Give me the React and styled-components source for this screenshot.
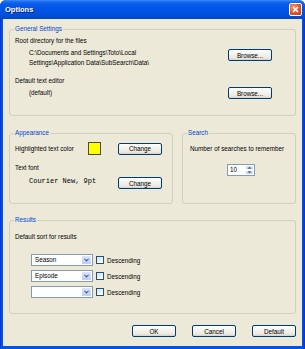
import React from "react";
import styled, { createGlobalStyle } from "styled-components";

const Global = createGlobalStyle`
  html, body { margin: 0; padding: 0; background: #ffffff; }
  * { box-sizing: border-box; }
  body { font-family: "Liberation Sans", Arial, sans-serif; }
`;

const Window = styled.div`
  width: 305px;
  height: 349px;
  display: flex;
  flex-direction: column;
  background: linear-gradient(90deg, #0831d9 0px, #0055e5 2px, #0055e5 302px, #0831d9 305px);
  border-radius: 6px 6px 0 0;
  overflow: hidden;
`;

const TitleBar = styled.div`
  height: 19px;
  flex: none;
  display: flex;
  align-items: center;
  justify-content: space-between;
  padding: 0 3px 0 5px;
  background: linear-gradient(
    180deg,
    #3d8cf7 0px,
    #1668ee 2px,
    #0558e8 5px,
    #0155e6 10px,
    #0150d9 15px,
    #0248c8 19px
  );
`;

const Title = styled.span`
  color: #ffffff;
  font-family: "Liberation Sans", Arial, sans-serif;
  font-weight: bold;
  font-size: 7.5px;
  line-height: 19px;
  text-shadow: 1px 1px 0 #0a1e80;
`;

const CloseButton = styled.div`
  width: 13px;
  height: 13px;
  border: 1px solid #ffffff;
  border-radius: 2px;
  background: radial-gradient(circle at 35% 30%, #f09a7c 0%, #e2582e 50%, #c13b12 100%);
  display: flex;
  align-items: center;
  justify-content: center;
`;

const Body = styled.div`
  flex: 1;
  margin: 0 3px 3px 3px;
  background: #ece9d8;
  padding: 10px 6px 9px 6px;
  display: flex;
  flex-direction: column;
  font-size: 6.3px;
  color: #000000;
`;

const Group = styled.div`
  position: relative;
  border: 1px solid #d0d0bf;
  border-radius: 3px;
  padding: ${(p) => p.$pad};
  width: ${(p) => p.$width || "auto"};
  flex: ${(p) => (p.$grow ? 1 : "none")};
  margin-top: ${(p) => p.$mt || 0}px;
`;

const Legend = styled.span`
  position: absolute;
  top: -5px;
  left: 4px;
  padding: 0 1px;
  background: #ece9d8;
  color: #0046d5;
  font-size: 6.3px;
  line-height: 8px;
`;

const Label = styled.div`
  line-height: 8px;
  margin-top: ${(p) => p.$mt || 0}px;
  white-space: nowrap;
`;

const PathRow = styled.div`
  display: flex;
  align-items: ${(p) => p.$align || "flex-start"};
  margin-top: ${(p) => p.$mt || 0}px;
  padding-left: 14px;
  padding-right: 23px;
`;

const PathText = styled.div`
  flex: 1;
  line-height: ${(p) => p.$lh}px;
  white-space: nowrap;
`;

const Button = styled.div`
  width: 44px;
  height: 12px;
  flex: none;
  border: 1px solid #003c74;
  border-radius: 2px;
  background: linear-gradient(180deg, #ffffff 0%, #f4f3ee 40%, #ebe9e0 80%, #d6d0c5 100%);
  display: flex;
  align-items: center;
  justify-content: center;
  font-size: 6.3px;
  color: #000000;
  margin-top: ${(p) => p.$mt || 0}px;
`;

const Columns = styled.div`
  display: flex;
  gap: 9px;
  margin-top: 17px;
`;

const ColorRow = styled.div`
  display: flex;
  align-items: center;
  height: 13px;
`;

const ColorLabel = styled.span`
  width: 73px;
  white-space: nowrap;
`;

const Swatch = styled.div`
  width: 13px;
  height: 13px;
  border: 1px solid #4a4a3a;
  background: #ffff00;
  margin-right: 17px;
`;

const FontRow = styled.div`
  display: flex;
  align-items: center;
  height: 12px;
  margin-top: 5px;
  padding-left: 14px;
`;

const FontSample = styled.span`
  width: 89px;
  font-family: "Liberation Mono", "Courier New", monospace;
  font-size: 7px;
  line-height: 9px;
  margin-top: -3px;
  white-space: nowrap;
`;

const Spinner = styled.div`
  width: 28px;
  height: 12px;
  margin: 11px 0 0 37px;
  border: 1px solid #7f9db9;
  background: #ffffff;
  display: flex;
`;

const SpinValue = styled.span`
  flex: 1;
  padding-left: 2px;
  line-height: 10px;
  font-size: 6.3px;
`;

const SpinButtons = styled.div`
  width: 9px;
  display: flex;
  flex-direction: column;
  gap: 0px;
  padding: 0 0 0 0;
`;

const SpinPart = styled.div`
  flex: 1;
  background: linear-gradient(180deg, #dbe6fd 0%, #c2d4fb 100%);
  border: 1px solid #ffffff;
  display: flex;
  align-items: center;
  justify-content: center;
`;

const SortList = styled.div`
  display: flex;
  flex-direction: column;
  gap: 4px;
  margin-top: 13px;
  padding-left: 16px;
`;

const SortRow = styled.div`
  display: flex;
  align-items: center;
  height: 12px;
`;

const Combo = styled.div`
  width: 62px;
  height: 12px;
  border: 1px solid #7f9db9;
  background: #ffffff;
  display: flex;
  padding: 1px;
`;

const ComboText = styled.span`
  flex: 1;
  padding-left: 2px;
  line-height: 8px;
  font-size: 6.3px;
`;

const ComboArrow = styled.div`
  width: 9px;
  background: linear-gradient(180deg, #dbe6fd 0%, #b9ccf9 100%);
  border-radius: 1px;
  display: flex;
  align-items: center;
  justify-content: center;
`;

const Check = styled.div`
  width: 8px;
  height: 8px;
  margin: 0 3px 0 3px;
  border: 1px solid #1c5180;
  background: linear-gradient(135deg, #dcdcd7 0%, #f4f4f0 60%, #ffffff 100%);
`;

const ButtonBar = styled.div`
  display: flex;
  justify-content: flex-end;
  gap: 16px;
  margin-top: 11px;
`;

const Chevron = () => (
  <svg width="5" height="4" viewBox="0 0 5 4">
    <path d="M0.5 0.8 L2.5 2.8 L4.5 0.8" stroke="#4d6185" strokeWidth="1.2" fill="none" />
  </svg>
);

const TriUp = () => (
  <svg width="5" height="3" viewBox="0 0 5 3">
    <path d="M0.5 2.7 L2.5 0.5 L4.5 2.7 Z" fill="#4d6185" />
  </svg>
);

const TriDown = () => (
  <svg width="5" height="3" viewBox="0 0 5 3">
    <path d="M0.5 0.3 L2.5 2.5 L4.5 0.3 Z" fill="#4d6185" />
  </svg>
);

const sorts = ["Season", "Episode", ""];

export default function App() {
  return (
    <>
      <Global />
      <Window>
        <TitleBar>
          <Title>Options</Title>
          <CloseButton>
            <svg width="7" height="7" viewBox="0 0 7 7">
              <path d="M1 1 L6 6 M6 1 L1 6" stroke="#ffffff" strokeWidth="1.5" />
            </svg>
          </CloseButton>
        </TitleBar>
        <Body>
          <Group $pad="7px 0 16px 5px">
            <Legend>General Settings</Legend>
            <Label>Root directory for the files</Label>
            <PathRow $mt={3}>
              <PathText $lh={10}>
                C:\Documents and Settings\Toto\Local
                <br />
                Settings\Application Data\SubSearch\Data\
              </PathText>
              <Button $mt={1}>Browse...</Button>
            </PathRow>
            <Label $mt={9}>Default text editor</Label>
            <PathRow $mt={2} $align="center">
              <PathText $lh={12}>(default)</PathText>
              <Button>Browse...</Button>
            </PathRow>
          </Group>

          <Columns>
            <Group $pad="8px 0 14px 5px" $width="164px">
              <Legend>Appearance</Legend>
              <ColorRow>
                <ColorLabel>Highlighted text color</ColorLabel>
                <Swatch />
                <Button>Change</Button>
              </ColorRow>
              <Label $mt={9}>Text font</Label>
              <FontRow>
                <FontSample>Courier New, 9pt</FontSample>
                <Button>Change</Button>
              </FontRow>
            </Group>
            <Group $pad="11px 0 0 7px" $grow>
              <Legend>Search</Legend>
              <Label>Number of searches to remember</Label>
              <Spinner>
                <SpinValue>10</SpinValue>
                <SpinButtons>
                  <SpinPart>
                    <TriUp />
                  </SpinPart>
                  <SpinPart>
                    <TriDown />
                  </SpinPart>
                </SpinButtons>
              </Spinner>
            </Group>
          </Columns>

          <Group $pad="12px 0 15px 5px" $mt={16}>
            <Legend>Results</Legend>
            <Label>Default sort for results</Label>
            <SortList>
              {sorts.map((s, i) => (
                <SortRow key={i}>
                  <Combo>
                    <ComboText>{s}</ComboText>
                    <ComboArrow>
                      <Chevron />
                    </ComboArrow>
                  </Combo>
                  <Check />
                  <span>Descending</span>
                </SortRow>
              ))}
            </SortList>
          </Group>

          <ButtonBar>
            <Button>OK</Button>
            <Button>Cancel</Button>
            <Button>Default</Button>
          </ButtonBar>
        </Body>
      </Window>
    </>
  );
}
